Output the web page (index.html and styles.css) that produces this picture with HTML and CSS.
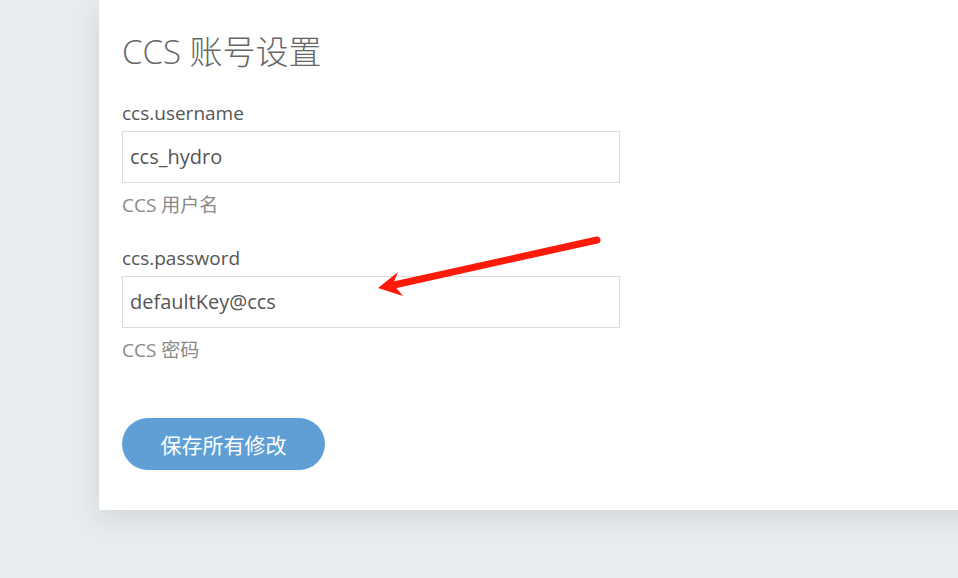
FILE: index.html
```html
<!DOCTYPE html>
<html lang="zh-CN">
<head>
<meta charset="utf-8">
<title>CCS 账号设置</title>
<link rel="stylesheet" href="styles.css">
</head>
<body>
<div class="page">
  <section class="card">
    <h1 class="title">CCS 账号设置</h1>
    <div class="field">
      <label class="label">ccs.username</label>
      <div class="input">ccs_hydro</div>
      <div class="help">CCS 用户名</div>
    </div>
    <div class="field field-second">
      <label class="label">ccs.password</label>
      <div class="input">defaultKey@ccs</div>
      <div class="help">CCS 密码</div>
    </div>
    <button class="btn">保存所有修改</button>
  </section>
  <svg class="arrow" width="958" height="578" viewBox="0 0 958 578">
    <line x1="597" y1="240" x2="394" y2="285" stroke="#ff1a0a" stroke-width="7" stroke-linecap="round"/>
    <polygon points="378,288 398,272 393,284 403,296" fill="#ff1a0a"/>
  </svg>
</div>
</body>
</html>
```
FILE: styles.css
```css
html, body {
  margin: 0;
  padding: 0;
  background: #e9edf0;
  height: 100%;
  overflow: hidden;
}
.page {
  position: relative;
  width: 958px;
  height: 578px;
}
.card {
  margin-left: 99px;
  width: 900px;
  background: #fff;
  box-shadow: 0 8px 28px rgba(60, 80, 100, 0.16);
  padding: 32px 0 40px 23px;
  box-sizing: border-box;
  font-family: "Open Sans", "Noto Sans CJK SC", sans-serif;
}
.title {
  margin: 0 0 29px;
  font-size: 33px;
  line-height: 40px;
  font-weight: 300;
  color: #666;
}
.field {
  display: flex;
  flex-direction: column;
  width: 498px;
}
.field-second {
  margin-top: 29px;
}
.label {
  font-size: 19px;
  line-height: 24px;
  color: #555;
  margin-bottom: 6px;
}
.input {
  box-sizing: border-box;
  height: 52px;
  border: 1px solid #dcdcdc;
  padding: 0 7px;
  font-size: 20px;
  line-height: 50px;
  color: #555;
}
.help {
  margin-top: 10px;
  font-size: 19px;
  line-height: 24px;
  color: #888;
}
.btn {
  display: block;
  margin-top: 56px;
  width: 203px;
  height: 52px;
  border: none;
  border-radius: 26px;
  background: #5f9fd6;
  color: #fff;
  font-family: "Open Sans", "Noto Sans CJK SC", sans-serif;
  font-size: 21px;
  padding: 0;
}
.arrow {
  position: absolute;
  left: 0;
  top: 0;
  pointer-events: none;
}
```
